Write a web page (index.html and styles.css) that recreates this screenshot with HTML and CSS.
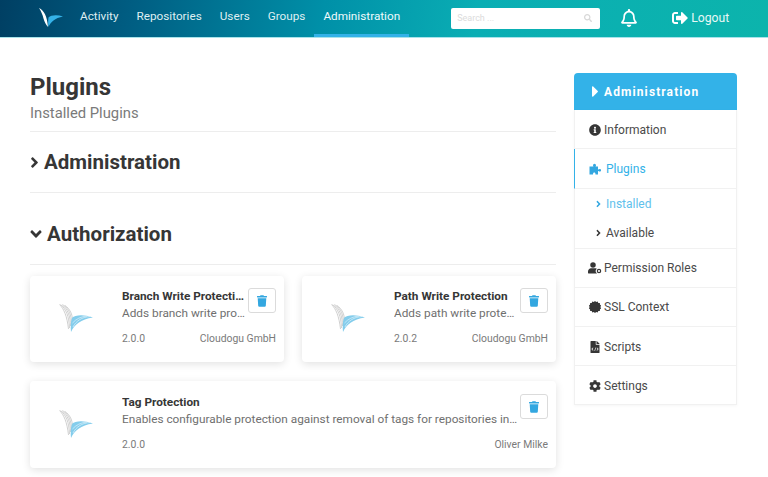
FILE: index.html
```html
<!DOCTYPE html>
<html lang="en">
<head>
<meta charset="utf-8">
<title>Plugins</title>
<link rel="stylesheet" href="styles.css">
</head>
<body>
<svg class="defs" aria-hidden="true">
  <symbol id="i-logo" viewBox="0 0 34 28">
    <g fill="none" stroke="#c4c4c4" stroke-width="0.8">
      <path d="M0.5 0.5C5 5 8 12 9.500 25"/>
      <path d="M1.500 0.500C7 5 10 12 10.500 24"/>
      <path d="M3 0.500C8.500 5 11.500 12 11.500 22"/>
      <path d="M4.500 1C10 5 12.500 11 12.500 20"/>
      <path d="M6 1.500C11 5 13.500 10 13.500 17"/>
    </g>
    <path class="wing" d="M34 13.500C24 10 16 11 13 14C11.500 18 11.500 24 12 28C15 21 22 15 34 13.500Z"/>
    <g fill="none" stroke="#fff" stroke-width="0.5">
      <path d="M14 23C17 17 23 13 31 12.500"/>
      <path d="M13.500 19C17 15 22 12.500 28 12"/>
    </g>
  </symbol>
  <symbol id="i-trash" viewBox="0 0 448 512"><path d="M432 32H312l-9.400-18.700A24 24 0 0 0 281.100 0H166.800a23.720 23.720 0 0 0-21.400 13.300L136 32H16A16 16 0 0 0 0 48v32a16 16 0 0 0 16 16h416a16 16 0 0 0 16-16V48a16 16 0 0 0-16-16zM53.200 467a48 48 0 0 0 47.900 45h245.800a48 48 0 0 0 47.900-45L416 128H32z"/></symbol>
  <symbol id="i-right" viewBox="0 0 256 512"><path d="M224.300 273l-136 136c-9.400 9.400-24.600 9.400-33.900 0l-22.600-22.600c-9.400-9.400-9.400-24.600 0-33.900l96.400-96.400-96.400-96.400c-9.400-9.400-9.400-24.600 0-33.900L54.300 103c9.400-9.400 24.600-9.400 33.900 0l136 136c9.500 9.400 9.500 24.600.1 34z"/></symbol>
</svg>

<header class="topbar">
  <svg class="brand" viewBox="0 0 24 19" aria-hidden="true">
    <path fill="#fff" d="M0 0C5 2.500 8 8 9 19C7 17 5.500 14 4.500 10.500C3.500 6.500 2 3 0 0Z"/>
    <path fill="#35b2e8" d="M24 8.500C18 6.500 12 7 9.500 9.500C9 13 9 16 9.500 19C11.500 14 16 10 24 8.500Z"/>
  </svg>
  <nav class="nav">
    <a class="nav-item">Activity</a>
    <a class="nav-item">Repositories</a>
    <a class="nav-item">Users</a>
    <a class="nav-item">Groups</a>
    <a class="nav-item is-active">Administration</a>
  </nav>
  <div class="search">
    <span class="search-text">Search ...</span>
    <svg class="search-icon" viewBox="0 0 512 512" aria-hidden="true"><path d="M505 442.700L405.300 343c-4.500-4.500-10.600-7-17-7H372c27.600-35.300 44-79.700 44-128C416 93.100 322.900 0 208 0S0 93.100 0 208s93.100 208 208 208c48.300 0 92.700-16.400 128-44v16.300c0 6.400 2.500 12.500 7 17l99.700 99.700c9.400 9.400 24.600 9.400 33.900 0l28.300-28.300c9.400-9.400 9.400-24.600.1-34zM208 336c-70.700 0-128-57.200-128-128 0-70.700 57.200-128 128-128 70.700 0 128 57.200 128 128 0 70.700-57.200 128-128 128z"/></svg>
  </div>
  <svg class="bell" viewBox="0 0 448 512" aria-hidden="true"><path d="M224 512c35.320 0 63.970-28.650 63.970-64H160.030c0 35.350 28.650 64 63.970 64zm215.390-149.710c-19.320-20.760-55.470-51.990-55.470-154.290 0-77.700-54.480-139.900-127.940-155.160V32c0-17.670-14.320-32-31.980-32s-31.980 14.330-31.980 32v20.840C118.560 68.100 64.080 130.300 64.080 208c0 102.300-36.150 133.530-55.470 154.290-6 6.450-8.660 14.160-8.610 21.710.11 16.400 12.980 32 32.100 32h383.800c19.120 0 32-15.600 32.100-32 .05-7.550-2.610-15.270-8.610-21.710zM67.530 368c21.220-27.970 44.420-74.330 44.530-159.420 0-.2-.06-.38-.06-.58 0-61.860 50.140-112 112-112s112 50.140 112 112c0 .2-.06.38-.06.58.11 85.100 23.310 131.460 44.530 159.420H67.530z"/></svg>
  <a class="logout">
    <svg class="logout-icon" viewBox="0 0 512 512" aria-hidden="true"><path d="M497 273L329 441c-15 15-41 4.500-41-17v-96H152c-13.300 0-24-10.700-24-24v-96c0-13.300 10.700-24 24-24h136V88c0-21.400 25.900-32 41-17l168 168c9.300 9.400 9.300 24.600 0 34zM192 436v-40c0-6.600-5.400-12-12-12H96c-17.700 0-32-14.300-32-32V160c0-17.700 14.300-32 32-32h84c6.600 0 12-5.400 12-12V76c0-6.600-5.400-12-12-12H96c-53 0-96 43-96 96v192c0 53 43 96 96 96h84c6.600 0 12-5.400 12-12z"/></svg>
    <span>Logout</span>
  </a>
</header>

<div class="page">
  <main class="content">
    <div class="page-head">
      <h1 class="title">Plugins</h1>
      <p class="subtitle">Installed Plugins</p>
    </div>

    <h2 class="section-head">
      <svg class="chev" aria-hidden="true"><use href="#i-right"/></svg>
      Administration
    </h2>

    <h2 class="section-head section-open">
      <svg class="chev-down" viewBox="0 0 320 512" aria-hidden="true"><path d="M143 352.300L7 216.300c-9.400-9.400-9.400-24.600 0-33.900l22.600-22.600c9.400-9.400 24.600-9.400 33.900 0l96.400 96.400 96.400-96.400c9.400-9.400 24.600-9.400 33.900 0l22.600 22.600c9.400 9.400 9.400 24.600 0 33.900l-136 136c-9.200 9.400-24.400 9.400-33.800 0z"/></svg>
      Authorization
    </h2>

    <div class="cards">
      <article class="card">
        <svg class="card-logo" aria-hidden="true"><use href="#i-logo"/></svg>
        <div class="card-body">
          <div class="card-top">
            <div class="card-text">
              <div class="card-title">Branch Write Protection</div>
              <div class="card-desc">Adds branch write protection for repositories</div>
            </div>
            <button class="trash" type="button" aria-label="Uninstall"><svg class="trash-icon"><use href="#i-trash"/></svg></button>
          </div>
          <div class="card-foot"><span>2.0.0</span><span>Cloudogu GmbH</span></div>
        </div>
      </article>
      <article class="card">
        <svg class="card-logo" aria-hidden="true"><use href="#i-logo"/></svg>
        <div class="card-body">
          <div class="card-top">
            <div class="card-text">
              <div class="card-title">Path Write Protection</div>
              <div class="card-desc">Adds path write protection for repositories</div>
            </div>
            <button class="trash" type="button" aria-label="Uninstall"><svg class="trash-icon"><use href="#i-trash"/></svg></button>
          </div>
          <div class="card-foot"><span>2.0.2</span><span>Cloudogu GmbH</span></div>
        </div>
      </article>
      <article class="card card-wide">
        <svg class="card-logo" aria-hidden="true"><use href="#i-logo"/></svg>
        <div class="card-body">
          <div class="card-top">
            <div class="card-text">
              <div class="card-title">Tag Protection</div>
              <div class="card-desc">Enables configurable protection against removal of tags for repositories in the SCM-Manager</div>
            </div>
            <button class="trash" type="button" aria-label="Uninstall"><svg class="trash-icon"><use href="#i-trash"/></svg></button>
          </div>
          <div class="card-foot"><span>2.0.0</span><span>Oliver Milke</span></div>
        </div>
      </article>
    </div>
  </main>

  <aside class="side">
    <div class="side-head">
      <svg class="caret" viewBox="0 100 170 312" aria-hidden="true"><path d="M0 384.662V127.338c0-17.818 21.543-26.741 34.142-14.142l128.662 128.662c7.810 7.810 7.810 20.474 0 28.284L34.142 398.804C21.543 411.404 0 402.480 0 384.662z"/></svg>
      Administration
    </div>
    <ul class="menu">
      <li class="menu-item">
        <svg class="menu-icon" viewBox="0 0 512 512" aria-hidden="true"><path d="M256 8C119.043 8 8 119.083 8 256c0 136.997 111.043 248 248 248s248-111.003 248-248C504 119.083 392.957 8 256 8zm0 110c23.196 0 42 18.804 42 42s-18.804 42-42 42-42-18.804-42-42 18.804-42 42-42zm56 254c0 6.627-5.373 12-12 12h-88c-6.627 0-12-5.373-12-12v-24c0-6.627 5.373-12 12-12h12v-64h-12c-6.627 0-12-5.373-12-12v-24c0-6.627 5.373-12 12-12h64c6.627 0 12 5.373 12 12v100h12c6.627 0 12 5.373 12 12v24z"/></svg>
        Information
      </li>
      <li class="menu-item is-current">
        <svg class="menu-icon" viewBox="0 0 26 24" aria-hidden="true"><path d="M8 4.500a3 3 0 0 1 6 0c0 1-.5 1.500-1 2.500h5v6h1c.7-.8 1.300-1.200 2.500-1.200 3.500 0 3.500 5.400 0 5.400-1.200 0-1.800-.4-2.500-1.200h-1v7h-5c0-3-1-4-2.500-4S8 20 8 23H1V7h8c-.5-1-1-1.500-1-2.500z"/></svg>
        Plugins
      </li>
      <li class="submenu">
        <a class="sub-item is-current"><svg class="sub-chev" aria-hidden="true"><use href="#i-right"/></svg>Installed</a>
        <a class="sub-item"><svg class="sub-chev" aria-hidden="true"><use href="#i-right"/></svg>Available</a>
      </li>
      <li class="menu-item">
        <svg class="menu-icon icon-wide" viewBox="0 0 28 24" aria-hidden="true"><circle cx="11" cy="6" r="5.500"/><path d="M1 22v-3c0-4 3-6.500 6-6.500h8c1.500 0 2.500.3 3.500 1a6.500 6.500 0 0 0 .5 9.500H2c-.6 0-1-.4-1-1z"/><circle cx="23" cy="18" r="3.300" fill="none" stroke="#363636" stroke-width="2.400"/></svg>
        Permission Roles
      </li>
      <li class="menu-item">
        <svg class="menu-icon" viewBox="0 0 24 24" aria-hidden="true"><path d="M12 0l2.400 2 3-1 1.200 2.900 3.100.3.300 3.100L24 8.600l-1 3.400 1 3.400-2 1.300-.3 3.100-3.100.3-1.200 2.900-3-1L12 24l-2.400-2-3 1-1.200-2.900-3.100-.3-.3-3.100L0 15.400 1 12 0 8.600l2-1.300.3-3.100 3.100-.3L6.600 1l3 1z"/></svg>
        SSL Context
      </li>
      <li class="menu-item">
        <svg class="menu-icon" viewBox="0 0 384 512" aria-hidden="true"><path d="M224 136V0H24C10.700 0 0 10.700 0 24v464c0 13.300 10.700 24 24 24h336c13.300 0 24-10.700 24-24V160H248c-13.200 0-24-10.800-24-24zM123 394l-17 18-71-66 71-66 17 18-48 48zm69 30l-24-7 40-140 24 7zm86-12l-17-18 48-48-48-48 17-18 71 66zM377 105L279.100 7c-4.500-4.500-10.600-7-17-7H256v128h128v-6.100c0-6.300-2.500-12.400-7-16.900z"/></svg>
        Scripts
      </li>
      <li class="menu-item">
        <svg class="menu-icon" viewBox="0 0 512 512" aria-hidden="true"><path d="M487.400 315.700l-42.600-24.600c4.300-23.200 4.300-47 0-70.200l42.600-24.600c4.900-2.800 7.100-8.600 5.500-14-11.100-35.600-30-67.800-54.700-94.600-3.800-4.100-10-5.100-14.800-2.300L380.800 110c-17.900-15.400-38.500-27.300-60.800-35.100V25.800c0-5.600-3.900-10.500-9.400-11.700-36.700-8.200-74.300-7.800-109.200 0-5.500 1.200-9.400 6.100-9.400 11.700V75c-22.200 7.900-42.800 19.800-60.800 35.100L88.700 85.500c-4.900-2.800-11-1.900-14.800 2.300-24.700 26.700-43.600 58.900-54.700 94.600-1.700 5.400.6 11.200 5.500 14L67.300 221c-4.300 23.200-4.300 47 0 70.200l-42.600 24.600c-4.900 2.800-7.100 8.600-5.500 14 11.100 35.600 30 67.800 54.700 94.600 3.800 4.100 10 5.100 14.800 2.300l42.600-24.600c17.900 15.400 38.500 27.300 60.800 35.100v49.200c0 5.600 3.900 10.500 9.400 11.700 36.700 8.200 74.300 7.800 109.200 0 5.500-1.200 9.400-6.100 9.400-11.700v-49.200c22.200-7.900 42.800-19.800 60.800-35.100l42.600 24.600c4.900 2.800 11 1.900 14.800-2.300 24.700-26.700 43.600-58.900 54.700-94.600 1.500-5.500-.7-11.300-5.600-14.100zM256 336c-44.100 0-80-35.900-80-80s35.900-80 80-80 80 35.900 80 80-35.900 80-80 80z"/></svg>
        Settings
      </li>
    </ul>
  </aside>
</div>
</body>
</html>
```
FILE: styles.css
```css
* { box-sizing: border-box; }
html, body { margin: 0; height: 100%; overflow: hidden; }
body { font-family: Roboto, "Liberation Sans", sans-serif; font-size: 12px; color: #363636; background: #fff; }
.defs { display: none; }

.topbar {
  height: 38px;
  display: flex;
  align-items: center;
  padding: 0 0 1px 39px;
  border-bottom: 1px solid #a8e3ea;
  background: linear-gradient(100deg, #003f63 0%, #005d82 17%, #0090a8 42%, #0aaeb4 62%, #0cb4ac 100%);
}
.brand { width: 24px; height: 19px; flex: none; margin-top: -2px; }
.nav { display: flex; align-self: stretch; margin-left: 8px; }
.nav-item {
  display: flex;
  align-items: center;
  height: 37px;
  padding: 0 9px 3px;
  border-bottom: 3px solid transparent;
  color: #dfeef2;
  font-size: 11.750px;
  line-height: 14px;
}
.nav-item.is-active { border-bottom-color: #33b2e8; color: #f0fafc; }
.search {
  width: 149px;
  height: 21px;
  margin-left: 42px;
  padding: 0 8px 0 6px;
  display: flex;
  align-items: center;
  justify-content: space-between;
  background: #fff;
  border-radius: 2px;
}
.search-text { font-size: 9px; color: #dcdcdc; }
.search-icon { width: 8px; height: 8px; fill: #d8d8d8; }
.bell { width: 16px; height: 18px; fill: #fff; margin-left: 21px; flex: none; }
.logout { display: flex; align-items: center; gap: 2px; margin-left: 34px; color: #e8f8f6; font-size: 12.200px; }
.logout-icon { width: 18px; height: 16px; fill: #fff; }

.page { display: flex; gap: 18px; padding: 35px 31px 0 30px; }
.content { width: 526px; flex: none; }
.page-head { padding-bottom: 10px; border-bottom: 1px solid #ededed; }
.title { margin: 0; font-size: 24px; line-height: 28px; font-weight: 700; color: #363636; }
.subtitle { margin: 4px 0 0; font-size: 14.800px; line-height: 16px; color: #7a7a7a; }
.section-head {
  display: flex;
  align-items: center;
  gap: 5px;
  height: 61px;
  margin: 0;
  border-bottom: 1px solid #ededed;
  font-size: 20.500px;
  font-weight: 700;
  color: #363636;
}
.section-open { margin-top: 11px; }
.chev { width: 9px; height: 17px; fill: #363636; }
.chev-down { width: 12px; height: 18px; fill: #363636; }

.cards { display: grid; grid-template-columns: minmax(0, 1fr) minmax(0, 1fr); gap: 19px 18px; margin-top: 11px; }
.card {
  height: 86px;
  display: flex;
  padding: 12px 8px 0 0;
  background: #fff;
  border-radius: 4px;
  box-shadow: 0 2px 8px rgba(10, 10, 10, 0.12);
}
.card-wide { grid-column: 1 / -1; height: 87px; padding-top: 13px; }
.card-logo { width: 34px; height: 28px; flex: none; margin: 16px 29px 0 29px; }
.wing { fill: #84cdec; }
.card-body { flex: 1; min-width: 0; display: flex; flex-direction: column; }
.card-top { display: flex; gap: 2px; height: 37px; }
.card-text { flex: 1; min-width: 0; }
.card-title { font-size: 11.800px; line-height: 16px; font-weight: 700; color: #363636; white-space: nowrap; overflow: hidden; text-overflow: ellipsis; }
.card-desc { margin-top: 1px; font-size: 11.800px; line-height: 17px; color: #6f6f6f; white-space: nowrap; overflow: hidden; text-overflow: ellipsis; }
.trash {
  width: 28px;
  height: 25px;
  flex: none;
  display: flex;
  align-items: center;
  justify-content: center;
  padding: 0;
  background: #fff;
  border: 1px solid #dbdbdb;
  border-radius: 3px;
}
.trash-icon { width: 10px; height: 12px; fill: #33a7e0; }
.card-foot { display: flex; justify-content: space-between; margin-top: 6px; font-size: 10.400px; line-height: 16px; color: #7a7a7a; }

.side { width: 163px; flex: none; }
.side-head {
  height: 37px;
  display: flex;
  align-items: center;
  gap: 6px;
  padding-left: 18px;
  background: #33b2e8;
  border-radius: 4px 4px 0 0;
  color: #fff;
  font-size: 12px;
  font-weight: 700;
  letter-spacing: 1.100px;
}
.caret { width: 6px; height: 11px; fill: #fff; }
.menu { margin: 0; padding: 0; list-style: none; border: 1px solid #f1f1f1; border-top: 0; box-shadow: 0 1px 3px rgba(10,10,10,0.04); }
.menu-item {
  height: 39.250px;
  display: flex;
  align-items: center;
  gap: 3px;
  padding: 1px 0 0 14px;
  border-bottom: 1px solid #f1f1f1;
  color: #4a4a4a;
  font-size: 12px;
}
.menu-item:last-child { border-bottom: 0; height: 38px; }
.menu-icon { width: 12px; height: 12px; fill: #363636; flex: none; }
.icon-wide { width: 15px; margin: 0 -1px 0 -2px; }
.menu-item.is-current { color: #33b2e8; border-left: 1px solid #33b2e8; margin-left: -1px; }
.menu-item.is-current .menu-icon { fill: #33a7e0; width: 13px; margin-right: 1px; }
.submenu { padding: 1px 0 0 21px; border-bottom: 1px solid #f1f1f1; height: 60px; display: flex; flex-direction: column; }
.sub-item { display: flex; align-items: center; gap: 5px; height: 29.500px; font-size: 12px; color: #4a4a4a; }
.sub-item.is-current { color: #5fc1ec; }
.sub-chev { width: 5px; height: 10px; fill: #363636; }
.sub-item.is-current .sub-chev { fill: #33a7e0; }
```
